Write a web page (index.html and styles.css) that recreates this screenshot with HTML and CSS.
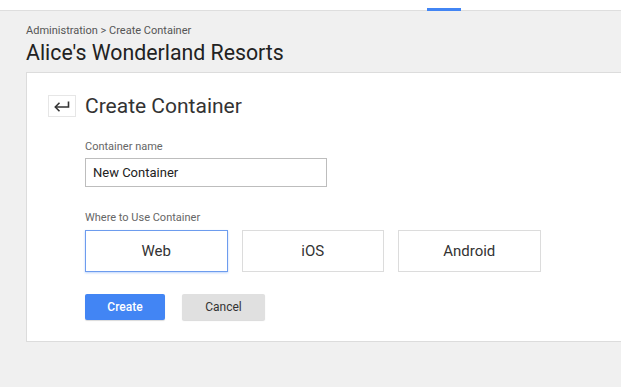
FILE: index.html
```html
<!DOCTYPE html>
<html lang="en">
<head>
  <meta charset="UTF-8" />
  <meta name="viewport" content="width=device-width, initial-scale=1.0" />
  <title>Create Container</title>
  <link rel="stylesheet" href="styles.css">
</head>
<body>
  <div class="topbar">
    <span class="tab-indicator"></span>
  </div>

  <div class="page">
    <div class="breadcrumb">Administration &gt; Create Container</div>
    <h1 class="account">Alice's Wonderland Resorts</h1>

    <div class="card">
      <div class="card-head">
        <button class="back-btn" aria-label="Back">
          <svg width="18" height="12" viewBox="0 0 18 12">
            <path d="M15.5 1.5v5.5H2.5" fill="none" stroke="#333" stroke-width="1.6"/>
            <path d="M6.5 2.8L2.3 7l4.2 4.2" fill="none" stroke="#333" stroke-width="1.6"/>
          </svg>
        </button>
        <h2>Create Container</h2>
      </div>

      <div class="form">
        <label class="field-label" for="name">Container name</label>
        <input id="name" class="text-input" type="text" value="New Container">

        <div class="field-label where">Where to Use Container</div>
        <div class="targets">
          <button class="target selected">Web</button>
          <button class="target">iOS</button>
          <button class="target">Android</button>
        </div>

        <div class="actions">
          <button class="btn-create">Create</button>
          <button class="btn-cancel">Cancel</button>
        </div>
      </div>
    </div>
  </div>
</body>
</html>
```

FILE: styles.css
```css
* {
  box-sizing: border-box;
}
body {
  margin: 0;
  padding: 0;
  font-family: Roboto, "Liberation Sans", Arial, sans-serif;
  background: #f0f0f0;
  color: #333;
  overflow: hidden;
  height: 387px;
}

.topbar {
  height: 11px;
  background: #fff;
  border-bottom: 1px solid #dedede;
  padding-left: 427px;
  padding-top: 8px;
}

.tab-indicator {
  display: block;
  width: 34px;
  height: 3px;
  background: #4285f4;
}

.page {
  padding-left: 26px;
}

.breadcrumb {
  margin-top: 13px;
  font-size: 11px;
  line-height: 13px;
  color: #555;
}

.account {
  margin: 3px 0 0;
  font-size: 21.3px;
  line-height: 25px;
  font-weight: 400;
  color: #222;
}

.card {
  margin-top: 7px;
  margin-right: -10px;
  height: 270px;
  background: #fff;
  border: 1px solid #dcdcdc;
  padding: 22px 0 0 21px;
}

.card-head {
  display: flex;
  align-items: center;
  gap: 9px;
}

.back-btn {
  width: 28px;
  height: 22px;
  padding: 0;
  border: 1px solid #e6e6e6;
  background: #fff;
  display: flex;
  align-items: center;
  justify-content: center;
  cursor: pointer;
}

.card-head h2 {
  margin: 0;
  font-size: 21px;
  line-height: 22px;
  font-weight: 400;
  color: #333;
}

.form {
  padding-left: 37px;
  display: flex;
  flex-direction: column;
  align-items: flex-start;
}

.field-label {
  margin-top: 23px;
  font-size: 11px;
  line-height: 13px;
  color: #666;
}

.text-input {
  margin-top: 5px;
  width: 242px;
  height: 29px;
  border: 1px solid #bdbdbd;
  padding: 0 7px;
  font-family: inherit;
  font-size: 13px;
  color: #222;
  outline: none;
}

.field-label.where {
  margin-top: 24px;
}

.targets {
  margin-top: 6px;
  display: flex;
  gap: 14px;
}

.target {
  width: 142.5px;
  height: 42px;
  background: #fff;
  border: 1px solid #dcdcdc;
  font-family: inherit;
  font-size: 15px;
  color: #333;
  cursor: pointer;
}

.target.selected {
  border-color: #6d9cee;
  box-shadow: 0 1px 2px rgba(66, 133, 244, 0.35);
}

.actions {
  margin-top: 22px;
  display: flex;
  gap: 17px;
}

.actions button {
  height: 26px;
  border: none;
  border-radius: 2px;
  font-family: inherit;
  font-size: 12px;
  cursor: pointer;
  box-shadow: 0 1px 1px rgba(0, 0, 0, 0.15);
}

.btn-create {
  width: 80px;
  background: #4285f4;
  color: #fff;
  font-weight: 500;
}

.btn-cancel {
  width: 83px;
  background: #e0e0e0;
  color: #333;
}
```
